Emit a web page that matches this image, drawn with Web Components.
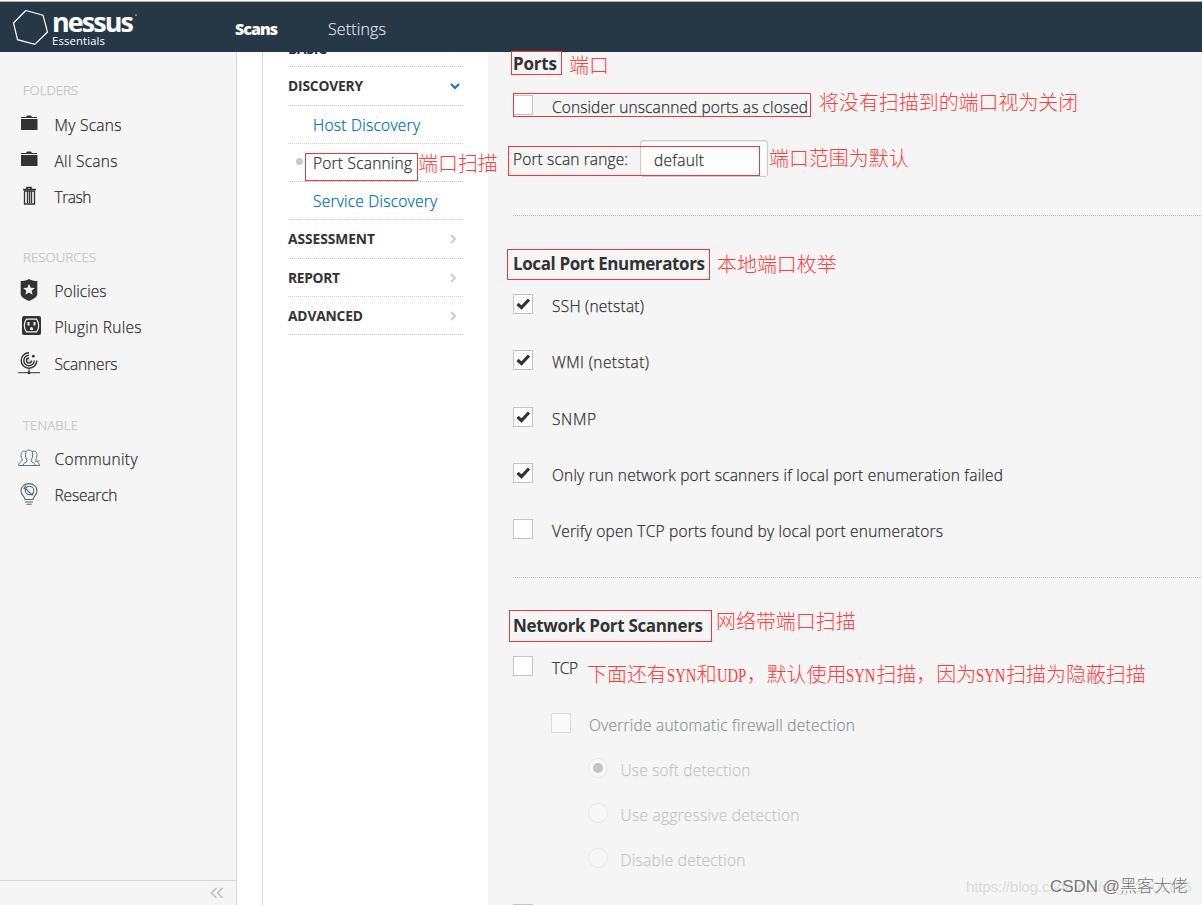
<!DOCTYPE html>
<html lang="en">
<head>
<meta charset="utf-8">
<title>Nessus Essentials / Scans</title>
<style>
    body {
        margin: 0;
        width: 1202px;
        height: 905px;
        overflow: hidden;
        font-family: "Open Sans", "Noto Sans", sans-serif;
        font-size: 15.5px;
        font-weight: 300;
        -webkit-text-stroke: .25px;
        color: #333;
        background: #fff;
    }
</style>
</head>
<body>
<scan-page></scan-page>
<script>
// Spaces its letters so that a label takes up exactly `w` pixels
class FitText extends HTMLElement {
    constructor() {
        super();
        this.attachShadow({ mode: 'open' });
        this.shadowRoot.innerHTML = `
            <style>
                :host { display: inline-block; white-space: nowrap; }
            </style>
            <slot></slot>
        `;
    }

    connectedCallback() {
        const w = Number(this.getAttribute('w'));
        if (!w) return;
        const chars = this.textContent.length;
        const natural = this.getBoundingClientRect().width;
        this.style.letterSpacing = (w - natural) / (chars - 1) + 'px';
        this.style.width = w + 'px';
    }
}

class TopBar extends HTMLElement {
    constructor() {
        super();
        this.attachShadow({ mode: 'open' });
        this.shadowRoot.innerHTML = `
            <style>
                :host {
                    display: flex;
                    box-sizing: border-box;
                    height: 52px;
                    border-top: 1px solid #fff;
                    box-shadow: inset 0 1px #a9b1b7;
                    background: #263746;
                    color: #fff;
                    flex: none;
                }
                .hexagon { margin: 8px 3px 0 12px; flex: none; }
                .brand { width: 183px; display: flex; flex-direction: column; -webkit-text-stroke: 0; }
                .name { display: flex; height: 33px; font-size: 27px; font-weight: 700; line-height: 42px; }
                .name i { width: 2px; height: 2px; margin: 13px 0 0 1px; background: #8a949d; border-radius: 1px; }
                .edition { font-size: 11.3px; line-height: 13px; font-weight: 400; }
                nav { display: flex; gap: 50px; line-height: 56px; font-size: 16px; }
                .active { font-weight: 800; -webkit-text-stroke: 0; }
                .link { color: #dcdfe2; }
            </style>
            <svg class="hexagon" width="37" height="38" viewBox="0 0 37 38" fill="none" stroke="#fff" stroke-width="1.2">
                <path d="M13.8 1.5L31 6.2L35.5 23L22.8 35.4L5.5 30.7L1.5 14Z"/>
            </svg>
            <div class="brand">
                <div class="name"><fit-text w="82">nessus</fit-text><i></i></div>
                <div class="edition"><fit-text w="53">Essentials</fit-text></div>
            </div>
            <nav>
                <fit-text class="active" w="43">Scans</fit-text>
                <fit-text class="link" w="58">Settings</fit-text>
            </nav>
        `;
    }
}

const icons = {
    folder: `<path d="M3 4h5l1-1.500h4l1 1.500h5v1H3z" fill="#333"/><path d="M3 6h16.500v11H3z" fill="#333"/>`,
    trash: `<path d="M9 4V2.500h4V4M5 4.500h13" fill="none" stroke="#333" stroke-width="1.600"/><path d="M6.500 6h10v13h-10zM9.500 6v12M11.500 6v12M13.500 6v12" fill="none" stroke="#333" stroke-width="1.300"/>`,
    shield: `<path d="M11 0C8.500 1.500 6 2 2.700 2v13c0 3 4 5 8.300 7c4.300-2 8.300-4 8.300-7V2C16 2 13.500 1.500 11 0z" fill="#333"/><path d="M11 4.800l1.600 3.900 4.200.3-3.200 2.700 1 4.100-3.600-2.200-3.600 2.200 1-4.100L5.200 9l4.200-.3z" fill="#f4f4f4"/>`,
    plug: `<rect x="4" y="1" width="19" height="19" rx="2" fill="#333"/><path d="M8.500 4.200h10c1.600 2 2.200 4 2.200 6.300s-.6 4.300-2.200 6.300h-10c-1.600-2-2.200-4-2.200-6.300s.6-4.300 2.200-6.300z" fill="none" stroke="#f4f4f4" stroke-width="1.200"/><path d="M10.500 7v3.500M16.500 7v3.500" stroke="#f4f4f4" stroke-width="2"/><path d="M12 15v-1.500a1.500 1.500 0 0 1 3 0v1.500z" fill="#f4f4f4"/>`,
    radar: `<g fill="none" stroke="#333"><path d="M11 0.700A7.800 7.800 0 1 0 18.800 8.500M11 3.300A5.200 5.200 0 1 0 16.200 8.500M11 6A2.500 2.500 0 1 0 13.500 8.500" stroke-width="1.400"/><path d="M11 8.500v-1M11 16.500v5M0 20.700h22"/></g><circle cx="15.300" cy="4.200" r="1.400" fill="#333"/><circle cx="11" cy="20.700" r="1.500" fill="#333"/>`,
    people: `<g fill="none" stroke="#66717c"><path d="M5 18.500c.2-3 3.500-2.500 4-4.500.2-1-1.500-2.500-1.500-6C7.500 4.500 8.800 3 11 3s3.700 1.500 3.700 5c0 3.500-1.700 5-1.500 6 .5 2 3.800 1.500 4.300 4.500z"/><path d="M8 4.500C5 3 2.800 5.200 3 8.700c.1 2.500 1.500 3.500 1.300 4.500C4 15 .7 14.500.5 18.500H5M14 4.500c3-1.500 5.200.7 5 4.200-.1 2.500-1.500 3.500-1.300 4.500.3 2 3.600 1.500 3.800 5.300H17"/><path d="M17.500 14.500l4-.7"/></g>`,
    bulb: `<g fill="none" stroke="#5b6875" stroke-width="1.100"><path d="M7 16.500c0-3-4-4-4-8.800C3 3.500 6.500.600 11 .600s8 2.900 8 7.100c0 4.800-4 5.800-4 8.800z"/><path d="M7 19h8M8.500 21.300h5"/><circle cx="11.500" cy="7.500" r="4.300"/><path d="M6 4l8 8M8 2.500L5.800 6.300M15.500 9.500l-1.500 3"/></g>`
};

class SideItem extends HTMLElement {
    constructor() {
        super();
        this.attachShadow({ mode: 'open' });
        this.shadowRoot.innerHTML = `
            <style>
                :host { display: flex; align-items: center; height: 36px; padding-left: 18px; }
                svg { flex: none; width: 24px; height: 24px; margin-right: 12.5px; overflow: visible; }
            </style>
            <svg viewBox="0 0 24 24">${icons[this.getAttribute('icon')]}</svg>
            <slot></slot>
        `;
    }
}

class SideBar extends HTMLElement {
    constructor() {
        super();
        this.attachShadow({ mode: 'open' });
        this.shadowRoot.innerHTML = `
            <style>
                :host {
                    display: flex;
                    flex-direction: column;
                    box-sizing: border-box;
                    width: 237px;
                    flex: none;
                    border-right: 1px solid #d8d8d8;
                    background: #f5f5f5;
                    padding-top: 21px;
                }
                section { margin-bottom: 26px; }
                section:first-of-type { margin-bottom: 25px; }
                h3 { margin: 0; padding-left: 23px; font-size: 13.3px; font-weight: 300; height: 33px; line-height: 35px; color: #c4c4c4; }
                section:first-of-type h3 { height: 34px; }
                side-item[icon="radar"] { margin-top: 1px; }
                footer {
                    margin-top: auto;
                    height: 24px;
                    border-top: 1px solid #d8d8d8;
                    display: flex;
                    align-items: center;
                    justify-content: flex-end;
                    padding-right: 12px;
                }
            </style>
            <section>
                <h3><fit-text w="55">FOLDERS</fit-text></h3>
                <side-item icon="folder"><fit-text w="67">My Scans</fit-text></side-item>
                <side-item icon="folder"><fit-text w="63">All Scans</fit-text></side-item>
                <side-item icon="trash"><fit-text w="37">Trash</fit-text></side-item>
            </section>
            <section>
                <h3><fit-text w="73">RESOURCES</fit-text></h3>
                <side-item icon="shield"><fit-text w="52">Policies</fit-text></side-item>
                <side-item icon="plug"><fit-text w="87">Plugin Rules</fit-text></side-item>
                <side-item icon="radar"><fit-text w="63">Scanners</fit-text></side-item>
            </section>
            <section>
                <h3><fit-text w="55">TENABLE</fit-text></h3>
                <side-item icon="people"><fit-text w="83">Community</fit-text></side-item>
                <side-item icon="bulb"><fit-text w="63">Research</fit-text></side-item>
            </section>
            <footer>
                <svg width="14" height="12" viewBox="0 0 14 12" fill="none" stroke="#b8b8b8" stroke-width="1.300"><path d="M6.500 1L1.500 6l5 5M12.500 1L7.500 6l5 5"/></svg>
            </footer>
        `;
    }
}

class SettingsNav extends HTMLElement {
    constructor() {
        super();
        this.attachShadow({ mode: 'open' });
        this.shadowRoot.innerHTML = `
            <style>
                :host {
                    display: block;
                    box-sizing: border-box;
                    width: 226px;
                    margin-left: 25px;
                    flex: none;
                    padding: 0 25px;
                    border-left: 1px solid #d8d8d8;
                    background: #fff;
                }
                .row {
                    display: flex;
                    align-items: center;
                    box-sizing: border-box;
                    height: 38px;
                    border-bottom: 1px dotted #ccc;
                }
                .row.tall { height: 39px; padding-bottom: 1px; }
                .row:first-of-type { margin-top: -24px; padding-top: 3px; }
                .head { font-size: 13.8px; font-weight: 700; justify-content: space-between; -webkit-text-stroke: 0; }
                .sub { padding-left: 25px; color: #0071b9; }
                .sub.current { color: #333; padding-left: 8px; }
                .current i { width: 7px; height: 7px; border-radius: 50%; background: #c8c8c8; margin: -3px 10px 0 0; }
                svg { width: 10px; height: 10px; margin-right: 5px; fill: none; stroke: #ccc; stroke-width: 2; }
                svg.open { stroke: #0a7ea0; margin-right: 3px; }
            </style>
            <div class="row tall head"><fit-text w="39">BASIC</fit-text><svg viewBox="0 0 10 10"><path d="M3 1l4 4-4 4"/></svg></div>
            <div class="row tall head"><fit-text w="75">DISCOVERY</fit-text><svg class="open" viewBox="0 0 10 10"><path d="M1 3l4 4 4-4"/></svg></div>
            <div class="row sub"><fit-text w="107">Host Discovery</fit-text></div>
            <div class="row sub current"><i></i><fit-text w="99">Port Scanning</fit-text></div>
            <div class="row sub"><fit-text w="124">Service Discovery</fit-text></div>
            <div class="row tall head"><fit-text w="87">ASSESSMENT</fit-text><svg viewBox="0 0 10 10"><path d="M3 1l4 4-4 4"/></svg></div>
            <div class="row head"><fit-text w="52">REPORT</fit-text><svg viewBox="0 0 10 10"><path d="M3 1l4 4-4 4"/></svg></div>
            <div class="row head"><fit-text w="75">ADVANCED</fit-text><svg viewBox="0 0 10 10"><path d="M3 1l4 4-4 4"/></svg></div>
        `;
    }
}

class OptionBox extends HTMLElement {
    constructor() {
        super();
        this.attachShadow({ mode: 'open' });
        this.shadowRoot.innerHTML = `
            <style>
                :host { display: flex; align-items: flex-start; height: 56.3px; }
                :host([indent="1"]) { padding-left: 38px; opacity: .5; }
                :host([indent="2"]) { padding-left: 75px; opacity: .25; height: 45px; }
                .box {
                    box-sizing: border-box;
                    width: 20px;
                    height: 20px;
                    flex: none;
                    margin-right: 19px;
                    border: 1px solid #c4c4c4;
                    background: #fff;
                }
                :host([indent="1"]) .box { margin-right: 18px; }
                :host([radio]) .box {
                    border-radius: 50%;
                    margin-right: 12.5px;
                    display: flex;
                    align-items: center;
                    justify-content: center;
                }
                .dot { width: 10px; height: 10px; border-radius: 50%; background: #333; }
                .label { line-height: 20px; margin-top: 2px; }
                :host([indent]) .label { margin-top: 1.5px; }
                svg { display: block; }
            </style>
            <div class="box">${this.mark()}</div>
            <div class="label"><slot></slot></div>
        `;
    }

    mark() {
        if (!this.hasAttribute('checked')) return '';
        if (this.hasAttribute('radio')) return '<div class="dot"></div>';
        return `<svg width="18" height="18" viewBox="0 0 18 18"><path d="M3.500 9l4 3.500L15 4.500" fill="none" stroke="#333" stroke-width="3.200"/></svg>`;
    }
}

class PortSettings extends HTMLElement {
    constructor() {
        super();
        this.attachShadow({ mode: 'open' });
        this.shadowRoot.innerHTML = `
            <style>
                :host {
                    display: block;
                    flex: 1;
                    min-width: 0;
                    overflow: hidden;
                    padding-left: 25px;
                    background: #f5f5f5;
                }
                h2 { margin: 0; font-size: 17px; font-weight: 700; height: 30px; line-height: 30px; -webkit-text-stroke: 0; }
                .ports { height: 163px; border-bottom: 1px dotted #bbb; }
                .ports h2 { height: 24px; line-height: 24px; margin-bottom: 19px; }
                .ports option-box { height: 45px; }
                .range { display: flex; align-items: center; height: 37px; }
                .input {
                    box-sizing: border-box;
                    width: 128px;
                    height: 37px;
                    line-height: 38px;
                    margin-left: 12px;
                    padding-left: 13px;
                    border: 1px solid #ccc;
                    border-radius: 3px;
                    background: #fff;
                    box-shadow: inset 0 1px 2px #e4e4e4;
                }
                .local { height: 328px; padding-top: 33px; border-bottom: 1px dotted #bbb; }
                .local h2, .network h2 { margin-bottom: 15px; }
                .network { padding-top: 33px; }
                option-box[indent="1"] { height: 45px; }
                option-box.tcp { height: 57px; }
                option-box.last { height: 56px; }
            </style>
            <div class="ports">
                <h2><fit-text w="44">Ports</fit-text></h2>
                <option-box><fit-text w="256">Consider unscanned ports as closed</fit-text></option-box>
                <div class="range">
                    <fit-text w="115">Port scan range:</fit-text>
                    <div class="input"><fit-text w="50">default</fit-text></div>
                </div>
            </div>
            <div class="local">
                <h2><fit-text w="192">Local Port Enumerators</fit-text></h2>
                <option-box checked><fit-text w="92">SSH (netstat)</fit-text></option-box>
                <option-box checked><fit-text w="97">WMI (netstat)</fit-text></option-box>
                <option-box checked><fit-text w="44">SNMP</fit-text></option-box>
                <option-box checked><fit-text w="451">Only run network port scanners if local port enumeration failed</fit-text></option-box>
                <option-box><fit-text w="391">Verify open TCP ports found by local port enumerators</fit-text></option-box>
            </div>
            <div class="network">
                <h2><fit-text w="190">Network Port Scanners</fit-text></h2>
                <option-box class="tcp"><fit-text w="26">TCP</fit-text></option-box>
                <option-box indent="1"><fit-text w="266">Override automatic firewall detection</fit-text></option-box>
                <option-box indent="2" radio checked><fit-text w="130">Use soft detection</fit-text></option-box>
                <option-box indent="2" radio><fit-text w="179">Use aggressive detection</fit-text></option-box>
                <option-box indent="2" radio class="last"><fit-text w="125">Disable detection</fit-text></option-box>
                <option-box></option-box>
            </div>
        `;
    }
}

// Red frames, remarks and watermarks lying on top of the page
class NoteLayer extends HTMLElement {
    constructor() {
        super();
        this.attachShadow({ mode: 'open' });
        const frames = [
            [511, 51, 51, 24], [513, 93, 298, 24], [508, 146, 252, 30], [305, 153, 113, 28],
            [507, 249, 203, 31], [509, 610, 203, 32]
        ];
        const notes = [
            [569, 65, '端口'],
            [819, 102, '将没有扫描到的端口视为关闭'],
            [769, 158, '端口范围为默认'],
            [418, 163, '端口扫描'],
            [717, 264, '本地端口枚举'],
            [716, 621, '网络带端口扫描'],
            [587, 674, '下面还有SYN和UDP，默认使用SYN扫描，因为SYN扫描为隐蔽扫描']
        ];
        const latin = text => text.replace(/[A-Z]+/g, '<span><b>$&</b></span>');
        this.shadowRoot.innerHTML = `
            <style>
                :host { position: absolute; left: 0; top: 0; width: 1202px; height: 905px; pointer-events: none; -webkit-text-stroke: 0; }
                .frame { position: absolute; box-sizing: border-box; border: 1px solid #fa3434; }
                .note {
                    position: absolute;
                    white-space: nowrap;
                    font: 300 19.950px/24px "Noto Sans CJK SC", sans-serif;
                    color: #ff3d3d;
                }
                .note span { display: inline-block; width: 30px; }
                .note b { display: inline-block; font: 19.500px/24px "Liberation Serif", serif; transform: scaleX(.75); transform-origin: 0 0; }
                .url, .csdn { position: absolute; white-space: nowrap; font-family: "Liberation Sans", "Noto Sans CJK SC", sans-serif; line-height: 24px; }
                .url { left: 966px; top: 875px; font-size: 15.500px; color: #dcdcdc; }
                .csdn { left: 1050px; top: 875px; font-size: 17px; color: #777; text-shadow: 1px 1px #fff; }
            </style>
            ${frames.map(([x, y, w, h]) => `<div class="frame" style="left:${x}px;top:${y}px;width:${w}px;height:${h}px"></div>`).join('')}
            ${notes.map(([x, y, text]) => `<div class="note" style="left:${x}px;top:${y - 12}px">${latin(text)}</div>`).join('')}
            <fit-text class="url" w="226">https://blog.csdn.net/qq_41901105</fit-text>
            <fit-text class="csdn" w="138">CSDN @黑客大佬</fit-text>
        `;
    }
}

class ScanPage extends HTMLElement {
    constructor() {
        super();
        this.attachShadow({ mode: 'open' });
        this.shadowRoot.innerHTML = `
            <style>
                :host { display: flex; flex-direction: column; height: 905px; position: relative; overflow: hidden; }
                main { display: flex; flex: 1; min-height: 0; overflow: hidden; }
            </style>
            <top-bar></top-bar>
            <main>
                <side-bar></side-bar>
                <settings-nav></settings-nav>
                <port-settings></port-settings>
            </main>
            <note-layer></note-layer>
        `;
    }
}

customElements.define('side-item', SideItem);
customElements.define('option-box', OptionBox);
customElements.define('top-bar', TopBar);
customElements.define('side-bar', SideBar);
customElements.define('settings-nav', SettingsNav);
customElements.define('port-settings', PortSettings);
customElements.define('note-layer', NoteLayer);
customElements.define('scan-page', ScanPage);
// last, so labels are measured once every parent is styled
customElements.define('fit-text', FitText);
</script>
</body>
</html>
